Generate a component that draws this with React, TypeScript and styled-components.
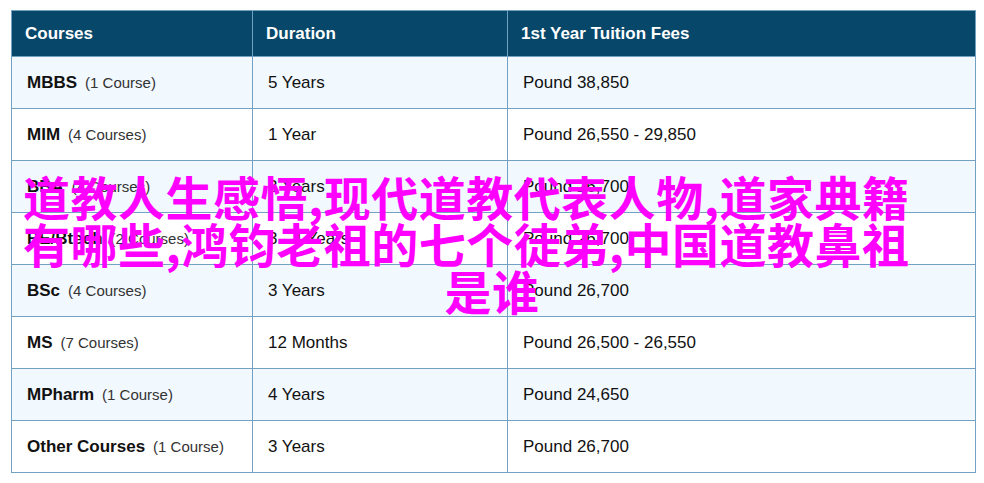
import styled, { createGlobalStyle } from "styled-components";

const GlobalStyle = createGlobalStyle`
  html, body {
    margin: 0;
    padding: 0;
    background: #ffffff;
  }
  body {
    font-family: "Liberation Sans", Arial, sans-serif;
    color: #111111;
  }
`;

const Page = styled.div`
  position: relative;
  width: 984px;
  height: 483px;
  padding: 10px 0 0 11px;
  box-sizing: border-box;
`;

const Table = styled.div`
  display: grid;
  grid-template-columns: 241px 255px 468px;
  grid-template-rows: 46px repeat(8, 52px);
  width: 965px;
  border-left: 1px solid #72a1c1;
  border-top: 1px solid #72a1c1;
  box-sizing: border-box;
`;

const HeadCell = styled.div`
  display: flex;
  align-items: center;
  padding-left: 13px;
  background: #07476a;
  color: #ffffff;
  font-size: 17px;
  font-weight: bold;
  border-right: 1px solid #72a1c1;
  border-bottom: 1px solid #72a1c1;
  box-sizing: border-box;
`;

const Cell = styled.div<{ $shade: boolean }>`
  display: flex;
  align-items: center;
  padding-left: 15px;
  background: ${(p) => (p.$shade ? "#f1f8fe" : "#ffffff")};
  font-size: 17px;
  color: #111111;
  border-right: 1px solid #72a1c1;
  border-bottom: 1px solid #72a1c1;
  box-sizing: border-box;
  white-space: nowrap;
`;

const CourseName = styled.b`
  font-weight: bold;
`;

const CourseCount = styled.span`
  margin-left: 8px;
  font-size: 15px;
  color: #333333;
`;

const Overlay = styled.div`
  position: absolute;
  left: 0;
  right: 0;
  top: 172px;
  font-family: "Noto Sans CJK SC", "Noto Sans", sans-serif;
  font-size: 47px;
  font-weight: bold;
  line-height: 47px;
  letter-spacing: 0.5px;
  color: #ff00ff;
  pointer-events: none;
`;

const OverlayLine = styled.div<{ $center?: boolean }>`
  white-space: nowrap;
  text-align: ${(p) => (p.$center ? "center" : "left")};
  padding-left: ${(p) => (p.$center ? "0" : "23px")};
`;

type Row = { name: string; count: string; duration: string; fee: string };

const rows: Row[] = [
  { name: "MBBS", count: "(1 Course)", duration: "5 Years", fee: "Pound 38,850" },
  { name: "MIM", count: "(4 Courses)", duration: "1 Year", fee: "Pound 26,550 - 29,850" },
  { name: "BBA", count: "(4 Courses)", duration: "3 Years", fee: "Pound 26,700" },
  { name: "BE/Btech", count: "(2 Courses)", duration: "3 - 4 Years", fee: "Pound 26,700" },
  { name: "BSc", count: "(4 Courses)", duration: "3 Years", fee: "Pound 26,700" },
  { name: "MS", count: "(7 Courses)", duration: "12 Months", fee: "Pound 26,500 - 26,550" },
  { name: "MPharm", count: "(1 Course)", duration: "4 Years", fee: "Pound 24,650" },
  { name: "Other Courses", count: "(1 Course)", duration: "3 Years", fee: "Pound 26,700" },
];

export default function App() {
  return (
    <>
      <GlobalStyle />
      <Page>
        <Table>
          <HeadCell>Courses</HeadCell>
          <HeadCell>Duration</HeadCell>
          <HeadCell>1st Year Tuition Fees</HeadCell>
          {rows.map((r, i) => [
            <Cell key={`n${i}`} $shade={i % 2 === 0}>
              <CourseName>{r.name}</CourseName>
              <CourseCount>{r.count}</CourseCount>
            </Cell>,
            <Cell key={`d${i}`} $shade={i % 2 === 0}>
              {r.duration}
            </Cell>,
            <Cell key={`f${i}`} $shade={i % 2 === 0}>
              {r.fee}
            </Cell>,
          ])}
        </Table>
        <Overlay>
          <OverlayLine>道教人生感悟,现代道教代表人物,道家典籍</OverlayLine>
          <OverlayLine>有哪些,鸿钧老祖的七个徒弟,中国道教鼻祖</OverlayLine>
          <OverlayLine $center>是谁</OverlayLine>
        </Overlay>
      </Page>
    </>
  );
}
